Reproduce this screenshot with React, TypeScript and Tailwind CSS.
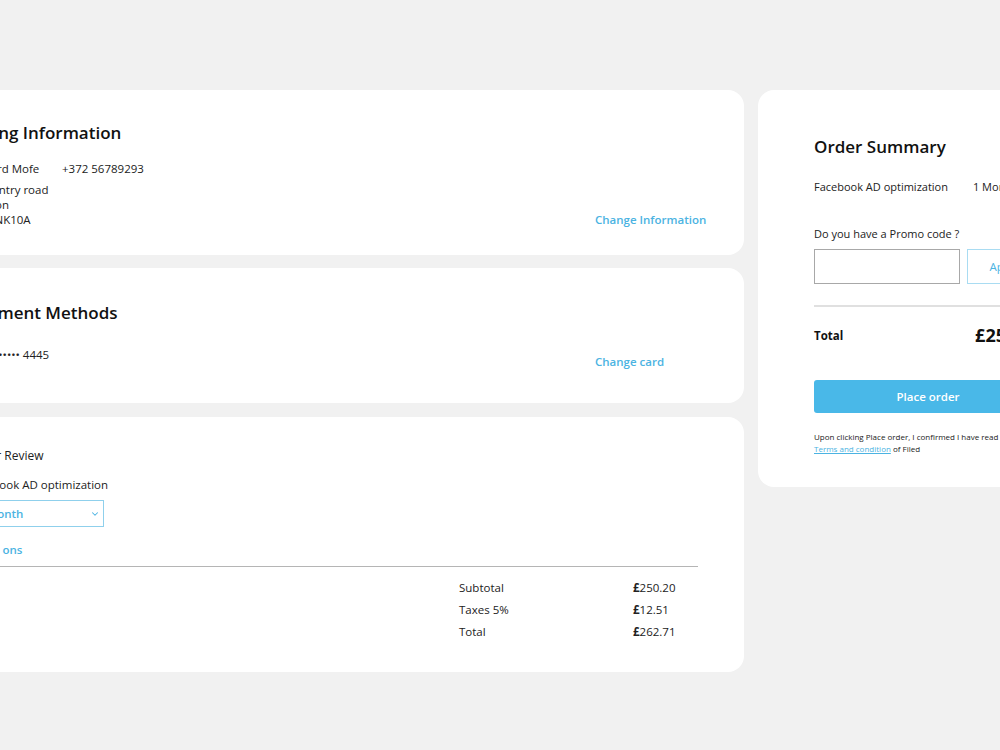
import { ChevronDown } from 'lucide-react';

const blue = 'text-[#4bb3e2]';

function Card({ children, className = '' }: { children: React.ReactNode; className?: string }) {
  return <div className={`bg-white rounded-[16px] ${className}`}>{children}</div>;
}

export default function App() {
  return (
    <div className="min-h-[750px] w-full overflow-hidden bg-[#f1f1f1] font-['Open_Sans',sans-serif] text-[#222]">
      <div className="flex justify-center gap-[14px] pt-[90px]">
        {/* Left column */}
        <div className="w-[842px] shrink-0 flex flex-col">
          {/* Billing */}
          <Card className="h-[165px] pl-[66px] pr-[42px] pt-[31px]">
            <h2 className="text-[17px] leading-[24px] font-semibold text-[#111]">Billing Information</h2>
            <div className="flex justify-between items-end">
              <div className="text-[11.5px] text-[#222]">
                <div className="flex mt-[16px] leading-[16px]">
                  <span className="w-[94px]">Richard Mofe</span>
                  <span>+372 56789293</span>
                </div>
                <div className="mt-[5px] leading-[15px]">
                  <div>1 Country road</div>
                  <div>London</div>
                  <div>SW1 NK10A</div>
                </div>
              </div>
              <a className={`w-[107px] mb-[-1px] whitespace-nowrap text-[11.5px] leading-[16px] font-semibold ${blue}`}>Change Information</a>
            </div>
          </Card>

          {/* Payment */}
          <Card className="h-[135px] mt-[13px] pl-[66px] pr-[42px] pt-[33px]">
            <h2 className="text-[17px] leading-[24px] font-semibold text-[#111]">Payment Methods</h2>
            <div className="flex justify-between items-start">
              <div className="mt-[22px] text-[11.5px] leading-[16px] whitespace-nowrap">
                ••••••••••••  4445
              </div>
              <a className={`w-[107px] mt-[29px] text-[11.5px] leading-[16px] font-semibold ${blue}`}>Change card</a>
            </div>
          </Card>

          {/* Order review */}
          <Card className="h-[255px] mt-[14px] pl-[66px] pr-[46px] pt-[31px]">
            <div className="text-[12px] leading-[16px]">Order Review</div>
            <div className="mt-[13px] text-[11.5px] leading-[16px]">Facebook AD optimization</div>
            <div className="mt-[7px] w-[136px] h-[27px] border border-[#8fd0ec] flex items-center justify-between pl-[8px] pr-[3px]">
              <span className={`text-[11.5px] font-semibold ${blue}`}>1 Month</span>
              <ChevronDown size={10} strokeWidth={2.5} className="text-[#4bb3e2]" />
            </div>
            <div className={`mt-[15px] text-[11.5px] leading-[16px] font-semibold ${blue}`}>+ Add ons</div>
            <div className="mt-[8px] h-px bg-[#b5b5b5]" />
            <div className="flex justify-end pr-[23px] mt-[10px] text-[11.5px] leading-[22px]">
              <div className="w-[174px]">
                <div>Subtotal</div>
                <div>Taxes 5%</div>
                <div>Total</div>
              </div>
              <div className="w-[42px]">
                <div><b className="font-bold">£</b>250.20</div>
                <div><b className="font-bold">£</b>12.51</div>
                <div><b className="font-bold">£</b>262.71</div>
              </div>
            </div>
          </Card>
        </div>

        {/* Right column */}
        <div className="w-[340px] shrink-0">
          <Card className="h-[397px] pl-[56px] pr-[56px] pt-[45px]">
            <h2 className="text-[17px] leading-[24px] font-semibold text-[#111]">Order Summary</h2>
            <div className="mt-[20px] flex text-[11px] leading-[16px] whitespace-nowrap">
              <span>Facebook AD optimization</span>
              <span className="ml-[25px]">1 Month</span>
            </div>
            <div className="mt-[31px] text-[11px] leading-[16px]">Do you have a Promo code ?</div>
            <div className="mt-[7px] flex gap-[7px]">
              <input className="w-[146px] h-[35px] border border-[#a8a8a8] outline-none" />
              <button className={`w-[75px] h-[35px] border border-[#a9dcf2] text-[11.5px] ${blue}`}>Apply</button>
            </div>
            <div className="mt-[21px] h-[2px] bg-[#e0e0e0]" />
            <div className="mt-[15px] flex justify-between items-center">
              <span className="text-[11.5px] font-bold text-[#111]">Total</span>
              <span className="text-[18px] font-bold text-[#111]">£250.20</span>
            </div>
            <button className="mt-[31px] w-full h-[33px] rounded-[3px] bg-[#49b8e8] text-white text-[11.5px] font-semibold">
              Place order
            </button>
            <p className="mt-[18px] text-[8px] leading-[12px] text-[#222] whitespace-nowrap">
              Upon clicking Place order, I confirmed I have read and agreed
              <br />
              <a className="text-[#4bb3e2] underline">Terms and condition</a> of Filed
            </p>
          </Card>
        </div>
      </div>
    </div>
  );
}
